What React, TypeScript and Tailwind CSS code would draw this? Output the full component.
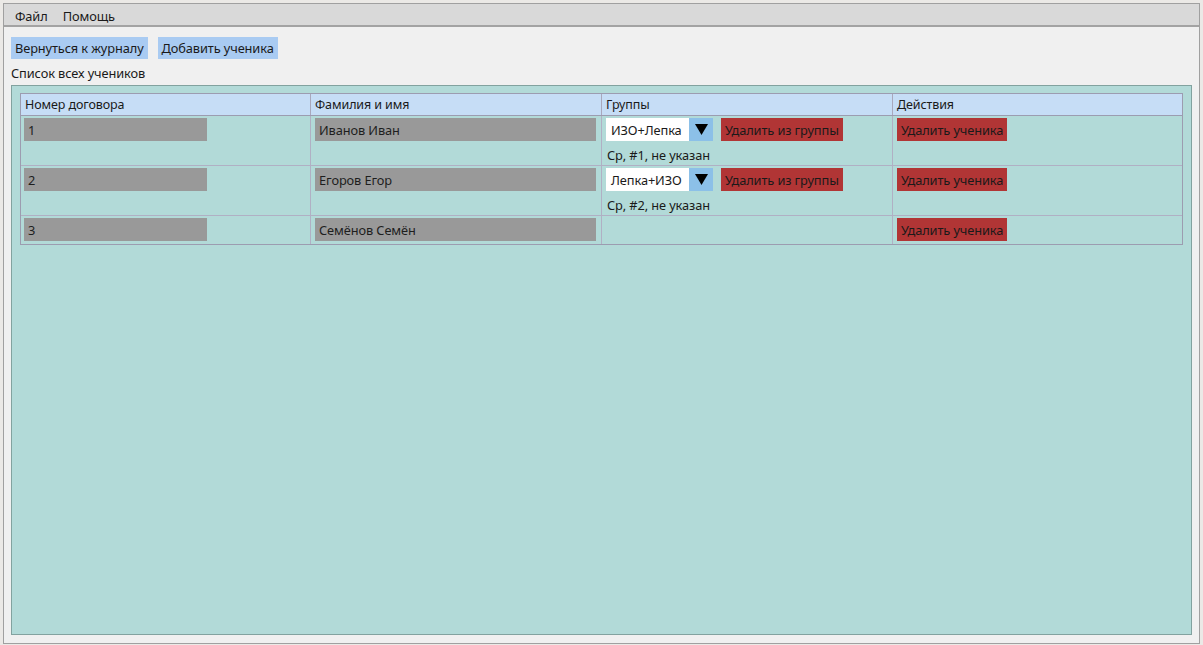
const font = { fontFamily: '"Noto Sans", "Open Sans", sans-serif' };

type Student = {
  id: string;
  name: string;
  group?: { title: string; info: string };
};

const students: Student[] = [
  { id: "1", name: "Иванов Иван", group: { title: "ИЗО+Лепка", info: "Ср, #1, не указан" } },
  { id: "2", name: "Егоров Егор", group: { title: "Лепка+ИЗО", info: "Ср, #2, не указан" } },
  { id: "3", name: "Семёнов Семён" },
];

function GreyField({ value, width }: { value: string; width: string }) {
  return (
    <div className={`${width} h-[23px] bg-[#999999] pl-[4px] pt-[2px] flex items-center text-[12.8px] tracking-[-0.1px] text-[#1e1e1e]`}>
      {value}
    </div>
  );
}

function RedButton({ children }: { children: React.ReactNode }) {
  return (
    <div className="h-[23px] bg-[#b13535] px-[4px] pt-[2px] flex items-center text-[12.8px] tracking-[-0.1px] text-[#1a1a1a] whitespace-nowrap">
      {children}
    </div>
  );
}

function GroupSelect({ title }: { title: string }) {
  return (
    <div className="flex h-[23px]">
      <div className="w-[83px] bg-white pl-[5px] pt-[2px] flex items-center text-[12.8px] tracking-[-0.1px] text-[#1a1a1a]">{title}</div>
      <div className="w-[24px] bg-[#8cc0e8] flex items-center justify-center">
        <svg width="13" height="11" viewBox="0 0 13 11">
          <path d="M0 0 H13 L6.5 11 Z" fill="#000" />
        </svg>
      </div>
    </div>
  );
}

export default function App() {
  return (
    <div className="w-[1203px] h-[645px] bg-[#ebe9e6] pt-[3px] pl-[3px] pr-[3px] pb-[1px]" style={font}>
      <div className="h-full border border-[#a0a0a0] bg-[#f0f0f0] flex flex-col">
        {/* menu */}
        <div className="h-[23px] bg-[#d9d9d9] border-b-2 border-[#a3a3a3] flex items-center pl-[11px] pt-[4px] gap-[15px] text-[12.8px] tracking-[-0.1px] text-[#1a1a1a]">
          <span>Файл</span>
          <span>Помощь</span>
        </div>

        <div className="flex-1 flex flex-col px-[7px] pb-[8px] pt-[10px]">
          <div className="flex gap-[10px]">
            <div className="h-[22px] bg-[#a9cbf2] px-[4px] pt-[1px] flex items-center text-[12.8px] tracking-[-0.1px] text-[#1a1a1a]">Вернуться к журналу</div>
            <div className="h-[22px] bg-[#a9cbf2] px-[4px] pt-[1px] flex items-center text-[12.8px] tracking-[-0.1px] text-[#1a1a1a]">Добавить ученика</div>
          </div>
          <div className="h-[26px] flex items-center text-[12.8px] tracking-[-0.1px] text-[#1a1a1a] pt-[4px]">Список всех учеников</div>

          <div className="flex-1 border border-[#82a29f] bg-[#b2dad8] pt-[7px] px-[8px]">
            <div className="border border-[#9c9cb0]">
              <div className="grid grid-cols-[290px_291px_291px_1fr] h-[22px] bg-[#c6ddf6] border-b border-[#9c9cb0] text-[12.5px] tracking-[-0.1px] text-[#1a1a1a]">
                <div className="pl-[4px] pt-[2px] flex items-center border-r border-[#a8a8bc]">Номер договора</div>
                <div className="pl-[4px] pt-[2px] flex items-center border-r border-[#a8a8bc]">Фамилия и имя</div>
                <div className="pl-[4px] pt-[2px] flex items-center border-r border-[#a8a8bc]">Группы</div>
                <div className="pl-[4px] pt-[2px] flex items-center">Действия</div>
              </div>
              {students.map((s, i) => (
                <div
                  key={s.id}
                  className={`grid grid-cols-[290px_291px_291px_1fr] ${s.group ? "h-[50px]" : "h-[28px]"} ${i < students.length - 1 ? "border-b border-[#b0b0c4]" : ""}`}
                >
                  <div className="pl-[3px] pt-[2px] border-r border-[#b0b0c4]">
                    <GreyField value={s.id} width="w-[183px]" />
                  </div>
                  <div className="pl-[4px] pt-[2px] border-r border-[#b0b0c4]">
                    <GreyField value={s.name} width="w-[281px]" />
                  </div>
                  <div className="pl-[4px] pt-[2px] border-r border-[#b0b0c4]">
                    {s.group && (
                      <>
                        <div className="flex gap-[8px]">
                          <GroupSelect title={s.group.title} />
                          <RedButton>Удалить из группы</RedButton>
                        </div>
                        <div className="h-[24px] flex items-center text-[12.8px] tracking-[-0.1px] text-[#1a1a1a] pl-[1px] pt-[6px]">{s.group.info}</div>
                      </>
                    )}
                  </div>
                  <div className="pl-[4px] pt-[2px] flex items-start">
                    <RedButton>Удалить ученика</RedButton>
                  </div>
                </div>
              ))}
            </div>
          </div>
        </div>
      </div>
    </div>
  );
}
